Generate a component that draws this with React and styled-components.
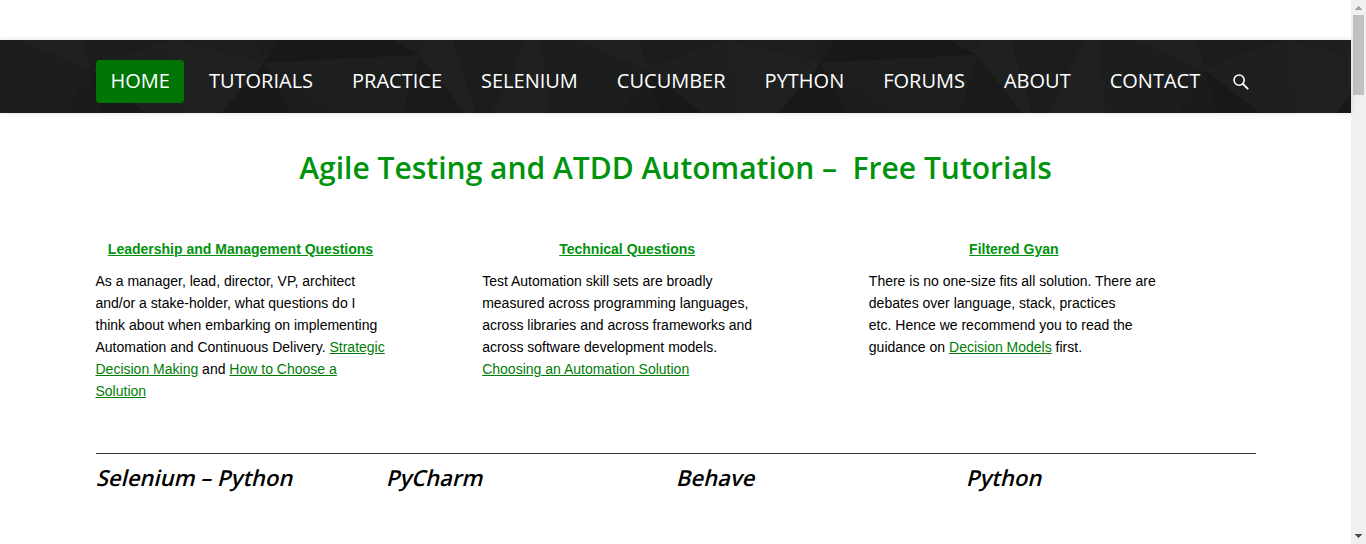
import React from "react";
import styled, { createGlobalStyle } from "styled-components";

const GlobalStyle = createGlobalStyle`
  * { box-sizing: border-box; }
  html, body { margin: 0; background: #fff; overflow: hidden; }
`;

const Page = styled.div`
  display: flex;
  height: 544px;
  overflow: hidden;
  background: #fff;
  color: #000;
  font: 14px/22px "Liberation Sans", Arial, sans-serif;
`;

const Content = styled.div`
  width: 1351px;
  flex: none;
  padding-top: 40px;
`;

const Header = styled.header`
  position: relative;
  height: 73px;
  background: #1c1c1c;
  box-shadow: 0 0 6px rgba(0, 0, 0, 0.12);
`;

const Pattern = styled.svg`
  position: absolute;
  inset: 0;
  display: block;
`;

const Nav = styled.nav`
  position: relative;
  display: flex;
  align-items: flex-start;
  gap: 10px;
  width: 1159px;
  margin: 0 auto;
  padding-top: 20px;
`;

const NavItem = styled.a`
  height: 43px;
  padding: 0 14.5px;
  border-radius: 4px;
  background: ${(p) => (p.$active ? "#007505" : "transparent")};
  color: #fff;
  font: 20px/42px "Open Sans", sans-serif;
  white-space: nowrap;
`;

const SearchButton = styled.a`
  display: flex;
  margin: 14px 0 0 8px;
`;

const Main = styled.main`
  width: 1160px;
  margin: 0 auto;
`;

const Title = styled.h1`
  margin: 35px 0 0;
  color: #00930d;
  font: 600 30px/40px "Open Sans", sans-serif;
  text-align: center;
  white-space: pre;
`;

const Features = styled.section`
  display: grid;
  grid-template-columns: repeat(3, 1fr);
  height: 215px;
  margin-top: 50px;
`;

const Feature = styled.article`
  width: 290px;
`;

const FeatureTitle = styled.h2`
  margin: 0 0 10px;
  color: #00930d;
  font-size: 14px;
  line-height: 22px;
  text-align: center;
  text-decoration: underline;
`;

const Text = styled.p`
  margin: 0;
`;

const Link = styled.a`
  color: #007d05;
  text-decoration: underline;
`;

const Topics = styled.section`
  display: grid;
  grid-template-columns: repeat(4, 1fr);
  border-top: 1px solid #333;
  padding-top: 8px;
`;

const Topic = styled.h3`
  margin: 0;
  font: 600 22px/30px "Open Sans", sans-serif;
  transform: skewX(-14deg);
  transform-origin: 0 23px;
`;

const ScrollTrack = styled.div`
  display: flex;
  flex-direction: column;
  align-items: center;
  justify-content: space-between;
  width: 15px;
  background: #f0f0f0;
`;

const ScrollThumb = styled.div`
  width: 11px;
  height: 80px;
  margin-bottom: auto;
  background: #c1c1c1;
`;

const Arrow = styled.svg`
  display: block;
`;

const items = ["Home", "Tutorials", "Practice", "Selenium", "Cucumber", "Python", "Forums", "About", "Contact"];

function Facets() {
  return (
    <Pattern width="1351" height="73" aria-hidden="true">
      <defs>
        <pattern id="facets" width="557" height="73" x="-17" patternUnits="userSpaceOnUse">
          <rect width="557" height="73" fill="#1c1d1d" />
          <path d="M0 0H37L107 29L79 73H9Z" fill="#1c1d1d" />
          <path d="M37 0H99L107 29Z" fill="#1f2021" />
          <path d="M99 0H187L107 29Z" fill="#1b1c1c" />
          <path d="M107 29L187 0L202 73H163Z" fill="#1e1f1f" />
          <path d="M107 29L79 73H119Z" fill="#1b1b1b" />
          <path d="M107 29L119 73H163Z" fill="#181818" />
          <path d="M187 0L281 23L238 73H202Z" fill="#1f2020" />
          <path d="M187 0H272L281 23Z" fill="#1d1e1e" />
          <path d="M272 0H295L281 23Z" fill="#1b1c1c" />
          <path d="M295 0H410L437 15L281 23Z" fill="#181818" />
          <path d="M281 23L238 73H308Z" fill="#181818" />
          <path d="M281 23L437 15L419 73H357Z" fill="#1d1e1e" />
          <path d="M281 23L357 73H308Z" fill="#1c1d1d" />
          <path d="M410 0H441L437 15Z" fill="#1d1e1e" />
          <path d="M441 0H470L492 73H482L437 15Z" fill="#1f2121" />
          <path d="M437 15L419 73H482Z" fill="#1a1a1a" />
          <path d="M470 0H544L509 73H492Z" fill="#1b1c1c" />
          <path d="M544 0H557V73H509Z" fill="#1f2020" />
          <path d="M0 0L9 73H0Z" fill="#1f2020" />
        </pattern>
      </defs>
      <rect width="1351" height="73" fill="url(#facets)" />
    </Pattern>
  );
}

export default function App() {
  return (
    <Page>
      <GlobalStyle />
      <Content>
        <Header>
          <Facets />
          <Nav>
            {items.map((item, i) => (
              <NavItem key={item} $active={i === 0}>{item.toUpperCase()}</NavItem>
            ))}
            <SearchButton aria-label="Search">
              <svg width="16" height="16" viewBox="0 0 16 16" fill="none" stroke="#fff">
                <circle cx="6.1" cy="6.1" r="5.1" strokeWidth="1.6" />
                <path d="M9.9 9.9L14.6 14.6" strokeWidth="2" strokeLinecap="round" />
              </svg>
            </SearchButton>
          </Nav>
        </Header>
        <Main>
          <Title>{"Agile Testing and ATDD Automation –  Free Tutorials"}</Title>
          <Features>
            <Feature>
              <FeatureTitle>Leadership and Management Questions</FeatureTitle>
              <Text>
                As a manager, lead, director, VP, architect and/or a stake-holder, what questions do I think about when
                embarking on implementing Automation and Continuous Delivery. <Link>Strategic Decision Making</Link> and{" "}
                <Link>How to Choose a Solution</Link>
              </Text>
            </Feature>
            <Feature>
              <FeatureTitle>Technical Questions</FeatureTitle>
              <Text>
                Test Automation skill sets are broadly measured across programming languages, across libraries and across
                frameworks and across software development models. <Link>Choosing an Automation Solution</Link>
              </Text>
            </Feature>
            <Feature>
              <FeatureTitle>Filtered Gyan</FeatureTitle>
              <Text>
                There is no one-size fits all solution. There are debates over language, stack, practices
                etc.&nbsp;Hence we recommend you to read the guidance on <Link>Decision Models</Link> first.
              </Text>
            </Feature>
          </Features>
          <Topics>
            <Topic>Selenium – Python</Topic>
            <Topic>PyCharm</Topic>
            <Topic>Behave</Topic>
            <Topic>Python</Topic>
          </Topics>
        </Main>
      </Content>
      <ScrollTrack>
        <Arrow width="15" height="15" shapeRendering="crispEdges">
          <path d="M4 10H11L7.5 6Z" fill="#a0a0a0" />
        </Arrow>
        <ScrollThumb />
        <Arrow width="15" height="15" shapeRendering="crispEdges">
          <path d="M4 5H11L7.5 9Z" fill="#505050" />
        </Arrow>
      </ScrollTrack>
    </Page>
  );
}
